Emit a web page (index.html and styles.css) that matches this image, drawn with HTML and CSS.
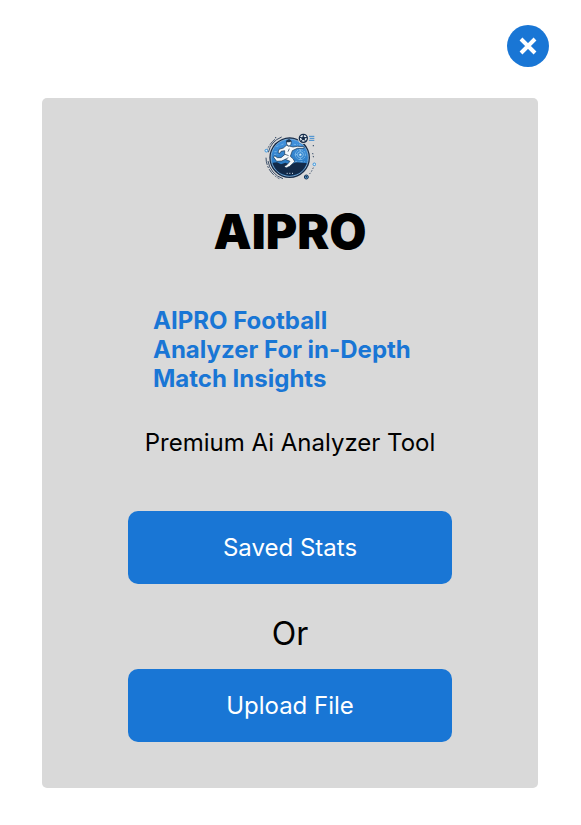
FILE: index.html
```html
<!DOCTYPE html>
<html lang="en">
<head>
<meta charset="utf-8">
<meta name="viewport" content="width=device-width, initial-scale=1">
<title>AIPRO</title>
<link rel="stylesheet" href="styles.css">
</head>
<body>
<header class="topbar">
  <button class="close" type="button" aria-label="Close">
    <svg class="close-icon" viewBox="0 0 18 18" aria-hidden="true"><path d="M2 2 16 16M16 2 2 16"/></svg>
  </button>
</header>
<main class="card">
  <svg class="logo" viewBox="27 24 156 144" role="img" aria-label="AIPRO logo" fill="none">
    <defs>
      <linearGradient id="sky" x1="0" y1="0" x2="0" y2="1">
        <stop offset="0" stop-color="#4293df"/>
        <stop offset="1" stop-color="#1f6fb6"/>
      </linearGradient>
      <clipPath id="disc"><circle cx="104" cy="98" r="54"/></clipPath>
    </defs>
    <g stroke="#3a4d67" stroke-width="3">
      <path d="M60 43A71 71 0 0 0 37 74M33 98A71 71 0 0 0 73 161" stroke-dasharray="22 4 6 4"/>
      <path d="M80 36A66 66 0 0 0 40 82M39 108A66 66 0 0 0 84 161"/>
      <path d="M173 84 176 100M175 128 169 140 162 149" stroke-dasharray="4 5"/>
    </g>
    <circle cx="104" cy="98" r="61" fill="#142a48"/>
    <circle cx="104" cy="98" r="56" stroke="#a9cdea" stroke-width="2" fill="url(#sky)"/>
    <g clip-path="url(#disc)">
      <path d="M45 114 66 112 78 118 91 113 106 119 123 112 165 115V155H45Z" fill="#122a49"/>
      <path d="M58 80H78M57 88H72M64 65 88 56M116 58 139 60M120 110H150" stroke="#8fc6ee" stroke-width="2" stroke-dasharray="7 4 2 3"/>
      <g stroke="#a5d6f8" stroke-width="2">
        <circle cx="136" cy="89" r="15" stroke-dasharray="5 3"/>
        <circle cx="136" cy="89" r="9"/>
        <circle cx="136" cy="89" r="3" fill="#e1f3ff"/>
        <path d="M119 89H126M136 73V79M136 99V105"/>
      </g>
    </g>
    <g fill="#f4f8fa" stroke="#14304e" stroke-width="2" stroke-linejoin="round">
      <path d="M94 61 85 69 72 73 69 83 75 85 78 79 89 77 89 89 78 98 67 98 59 92 56 97 65 109 80 108 91 103 105 109 96 119 88 124 93 129 104 124 119 110 115 102 106 94 112 77 127 70 146 70 148 65 127 64 114 66Z"/>
      <path d="M94 49 101 44 109 49 108 58 102 64 95 58Z"/>
      <path d="M93 52 95 45 104 43 110 49 103 52Z" fill="#173350" stroke="none"/>
      <path d="M90 88 101 92M91 103 100 98M103 71 99 80"/>
    </g>
    <path d="M95 145H98M103 145H106M111 145H114" stroke="#dcecf8" stroke-width="3"/>
    <circle cx="145" cy="40" r="17" fill="#d9d9d9"/>
    <circle cx="145" cy="40" r="12" fill="#edf4f8" stroke="#132a48" stroke-width="4"/>
    <path d="M145 35 150 38 148 44 142 44 140 38ZM145 29V35M134 37 140 38M156 37 150 38M142 44 138 49M148 44 152 49" fill="#132a48" stroke="#132a48" stroke-width="3"/>
    <path d="M162 34H178M164 40H178M162 46H178" stroke="#3d8bcf" stroke-width="3"/>
    <g fill="#d9f0ff" stroke="#3b93d9" stroke-width="3">
      <circle cx="34" cy="77" r="4"/>
      <circle cx="178" cy="118" r="4"/>
    </g>
    <circle cx="154" cy="156" r="6" fill="#5aa6df" stroke="#1b3554" stroke-width="3"/>
    <path d="M151 154 155 152 157 156 153 159Z" fill="#1b3554"/>
    <g fill="#263e5b"><circle cx="62" cy="38" r="2"/><circle cx="175" cy="62" r="2"/></g>
  </svg>
  <h1 class="title">AIPRO</h1>
  <h2 class="tagline">AIPRO Football Analyzer For in-Depth Match Insights</h2>
  <p class="subtitle">Premium Ai Analyzer Tool</p>
  <button class="action" type="button">Saved Stats</button>
  <p class="or">Or</p>
  <button class="action" type="button">Upload File</button>
</main>
</body>
</html>
```
FILE: styles.css
```css
* {
  box-sizing: border-box;
}

body {
  margin: 0;
  background: #fff;
  color: #000;
  font-family: Inter, "Liberation Sans", sans-serif;
  font-size: 24px;
  font-weight: 400;
  line-height: 29px;
}

h1,
h2,
p {
  margin: 0;
}

.topbar {
  display: flex;
  justify-content: flex-end;
  padding: 25px 32px 31px;
}

.close {
  display: grid;
  place-items: center;
  width: 42px;
  height: 42px;
  padding: 0;
  border: 0;
  border-radius: 50%;
  background: #1976d5;
  cursor: pointer;
}

.close-icon {
  width: 18px;
  height: 18px;
  fill: none;
  stroke: #fff;
  stroke-width: 4;
}

.card {
  display: flex;
  flex-direction: column;
  align-items: center;
  margin: 0 43px 37px 42px;
  padding: 35px 24px 46px;
  border-radius: 5px;
  background: #d9d9d9;
}

.logo {
  width: 52px;
  height: 48px;
}

.title {
  margin-top: 22px;
  font-size: 48px;
  font-weight: 900;
  line-height: 58px;
}

.tagline {
  width: 100%;
  max-width: 274px;
  margin-top: 45px;
  color: #1976d5;
  font-size: 24px;
  font-weight: 700;
}

.subtitle {
  margin-top: 35px;
}

.action {
  width: 100%;
  max-width: 324px;
  height: 73px;
  border: 0;
  border-radius: 10px;
  background: #1976d5;
  color: #fff;
  font: inherit;
  cursor: pointer;
}

.subtitle + .action {
  margin-top: 54px;
}

.or {
  margin: 30px 0 16px;
  font-size: 32px;
  line-height: 39px;
}
```
